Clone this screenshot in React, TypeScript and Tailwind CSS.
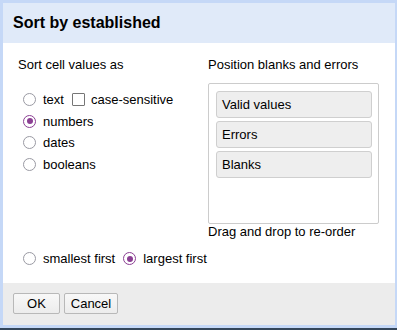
import { ReactNode } from 'react'

function Radio({ checked, label }: { checked?: boolean; label: string }) {
  return (
    <div className="flex items-center">
      <span
        className={
          checked
            ? 'w-[13px] h-[13px] rounded-full border-[1.5px] border-[#8b3f93] bg-white flex items-center justify-center'
            : 'w-[13px] h-[13px] rounded-full border-[1.5px] border-[#9a9aa3] bg-white'
        }
      >
        {checked && <span className="w-[6px] h-[6px] rounded-full bg-[#8b3f93]" />}
      </span>
      <span className="ml-[7px]">{label}</span>
    </div>
  )
}

function Item({ children }: { children: ReactNode }) {
  return (
    <div className="h-[27px] flex items-center px-[5px] bg-[#eeeeee] border border-[#cfcfcf] rounded-[3px]">
      {children}
    </div>
  )
}

export default function App() {
  return (
    <div
      className="w-[397px] h-[330px] flex flex-col bg-[#c5d8f7] pl-[3px] pt-[3px] pr-[2px] text-[13px] leading-[15px] text-black"
      style={{ fontFamily: '"Liberation Sans", Arial, sans-serif' }}
    >
      <div className="h-[40px] flex items-center pl-[10px] bg-[#e0eaf9]">
        <span className="text-[16px] leading-[18px] font-bold">Sort by established</span>
      </div>

      <div className="h-[240px] bg-white pl-[15px] pt-[14px] flex flex-col">
        <div className="flex">
          <div className="w-[190px]">
            <div>Sort cell values as</div>
            <div className="mt-[16px] pl-[5px]">
              <div className="h-[22px] flex items-center">
                <Radio label="text" />
                <span className="ml-[8px] w-[13px] h-[13px] border border-[#767676] rounded-[1px] bg-white" />
                <span className="ml-[6px]">case-sensitive</span>
              </div>
              <div className="h-[22px] flex items-center">
                <Radio checked label="numbers" />
              </div>
              <div className="h-[21px] flex items-center">
                <Radio label="dates" />
              </div>
              <div className="h-[22px] flex items-center">
                <Radio label="booleans" />
              </div>
            </div>
          </div>

          <div className="w-[171px]">
            <div>Position blanks and errors</div>
            <div className="mt-[11px] h-[141px] border border-[#cccccc] rounded-[2px] pt-[7px] pl-[7px] pr-[6px] flex flex-col gap-[3px]">
              <Item>Valid values</Item>
              <Item>Errors</Item>
              <Item>Blanks</Item>
            </div>
            <div>Drag and drop to re-order</div>
          </div>
        </div>

        <div className="mt-[9px] pl-[5px] h-[21px] flex items-center gap-[8px]">
          <Radio label="smallest first" />
          <Radio checked label="largest first" />
        </div>
      </div>

      <div className="h-[42px] bg-[#ececec] pl-[10px] pt-[10px] flex gap-[4px]">
        <button className="w-[47px] h-[21px] border border-[#b8b8b8] rounded-[2px] bg-gradient-to-b from-[#f8f8f8] to-[#ececec]">
          OK
        </button>
        <button className="w-[54px] h-[21px] border border-[#b8b8b8] rounded-[2px] bg-gradient-to-b from-[#f8f8f8] to-[#ececec]">
          Cancel
        </button>
      </div>

      <div className="h-[3px]" />
      <div className="h-[2px] -ml-[3px] -mr-[2px] bg-[#34465a]" />
    </div>
  )
}
